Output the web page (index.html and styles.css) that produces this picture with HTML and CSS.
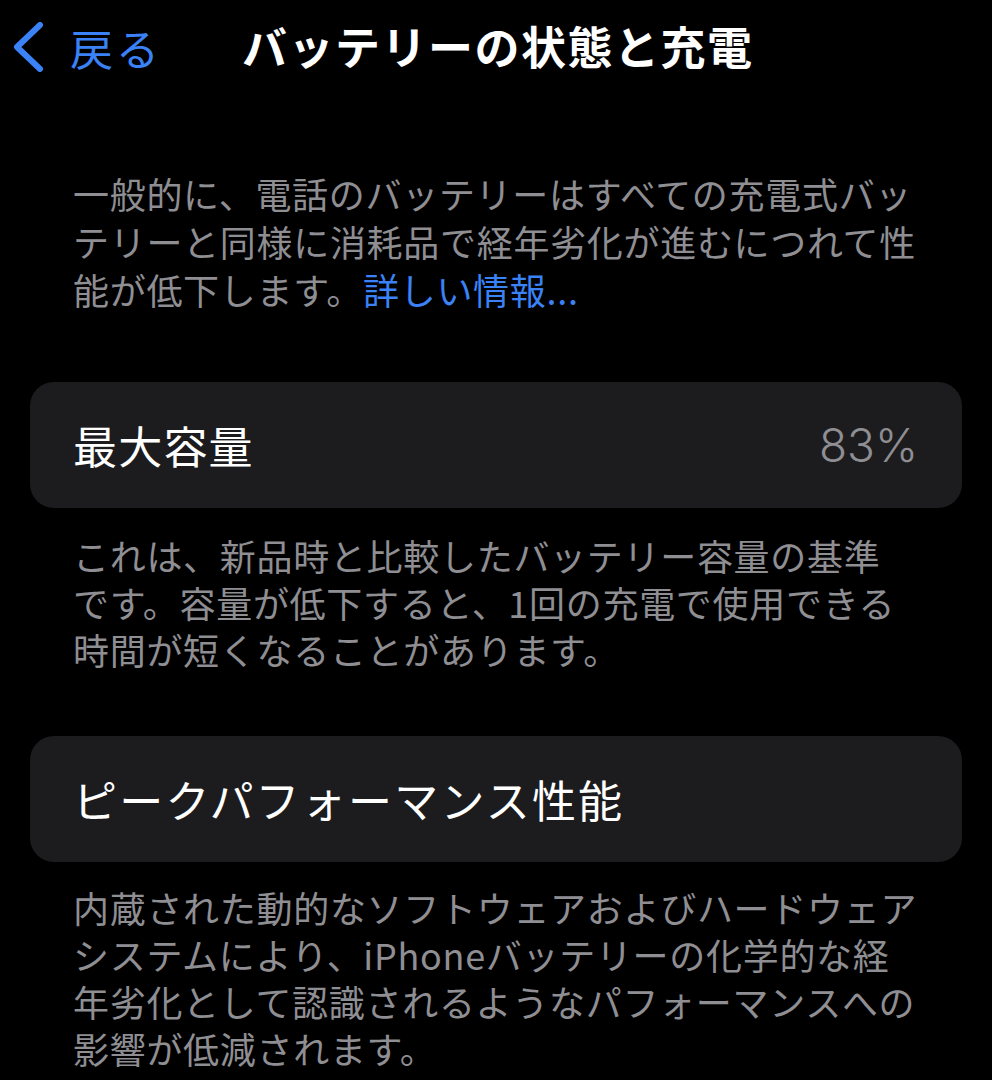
FILE: index.html
```html
<!DOCTYPE html>
<html lang="ja">
<head>
<meta charset="utf-8">
<link rel="stylesheet" href="styles.css">
</head>
<body>
<div class="screen">
  <header class="nav">
    <a class="back">
      <svg class="chev" width="36" height="50" viewBox="0 0 36 50"><polyline points="30,3 7,25 30,47" fill="none" stroke="#3b82f6" stroke-width="6" stroke-linecap="round" stroke-linejoin="round"/></svg>
      <span class="back-label">戻る</span>
    </a>
    <h1 class="title">バッテリーの状態と充電</h1>
  </header>

  <p class="note intro">一般的に、電話のバッテリーはすべての充電式バッ<br>テリーと同様に消耗品で経年劣化が進むにつれて性<br>能が低下します。<span class="link">詳しい情報...</span></p>

  <div class="card">
    <span class="card-label">最大容量</span>
    <span class="card-value">83%</span>
  </div>

  <p class="note n2">これは、新品時と比較したバッテリー容量の基準<br>です。容量が低下すると、1回の充電で使用できる<br>時間が短くなることがあります。</p>

  <div class="card card2">
    <span class="card-label wide">ピークパフォーマンス性能</span>
  </div>

  <p class="note n3">内蔵された動的なソフトウェアおよびハードウェア<br>システムにより、iPhoneバッテリーの化学的な経<br>年劣化として認識されるようなパフォーマンスへの<br>影響が低減されます。</p>
</div>
</body>
</html>
```

FILE: styles.css
```css
html, body {
  margin: 0;
  padding: 0;
  background: #000;
}
body {
  font-family: "Noto Sans CJK JP", "Noto Sans", sans-serif;
  color: #fff;
  width: 992px;
  height: 1080px;
  overflow: hidden;
}
.screen {
  display: flex;
  flex-direction: column;
}
.nav {
  height: 96px;
  display: flex;
  align-items: center;
  padding-left: 10px;
  padding-bottom: 4px;
  box-sizing: border-box;
}
.back {
  display: flex;
  align-items: center;
  gap: 24px;
  margin-top: 2px;
}
.chev {
  display: block;
}
.back-label {
  color: #3b82f6;
  font-size: 43px;
  line-height: 50px;
  letter-spacing: 3px;
}
.title {
  margin: 0 0 0 80px;
  font-size: 45px;
  font-weight: 700;
  line-height: 50px;
  letter-spacing: 1.5px;
}
.note {
  margin: 0;
  padding: 0 20px 0 73px;
  color: #8e8e93;
  font-size: 36px;
  letter-spacing: 0.7px;
  line-height: 48px;
}
.intro {
  margin-top: 73px;
}
.link {
  color: #3b82f6;
}
.card {
  margin: 69px 30px 0;
  height: 126px;
  background: #1c1c1e;
  border-radius: 24px;
  display: flex;
  align-items: center;
  justify-content: space-between;
  padding: 0 44px 0 43px;
}
.card-label {
  font-size: 44px;
  letter-spacing: 1.2px;
}
.card-label.wide {
  letter-spacing: 2.2px;
}
.card-value {
  color: #8e8e93;
  font-size: 46px;
  font-family: "Inter", "Noto Sans", sans-serif;
  font-weight: 300;
}
.n2 {
  margin-top: 24px;
  line-height: 47px;
}
.card2 {
  margin-top: 63px;
}
.n3 {
  margin-top: 22px;
  line-height: 47px;
}
```
